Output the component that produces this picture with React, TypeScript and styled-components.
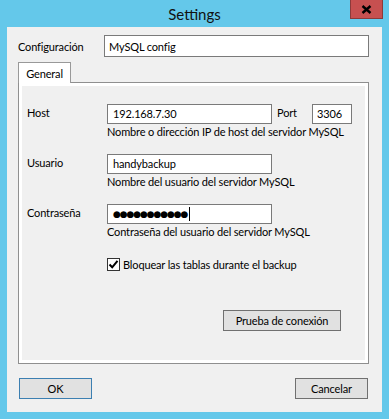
import React from 'react';
import styled, { createGlobalStyle } from 'styled-components';

const FRAME_BLUE = '#64c8ea';
const FACE = '#f0f0f0';
const EDGE = '#7a7a7a';

const GlobalStyle = createGlobalStyle`
  html, body {
    margin: 0;
    padding: 0;
    background: ${FRAME_BLUE};
  }
  body {
    font-family: Lato, 'Noto Sans', sans-serif;
    font-size: 11px;
    letter-spacing: -0.15px;
    color: #000;
  }
`;

/* Window chrome */
const Window = styled.div`
  width: 389px;
  height: 419px;
  display: flex;
  flex-direction: column;
  background: ${FRAME_BLUE};
  overflow: hidden;
`;

const TitleBar = styled.div`
  position: relative;
  height: 27px;
  display: flex;
  align-items: center;
  justify-content: center;
  font-size: 15px;
  letter-spacing: 0;
  color: #111;
`;

const CloseButton = styled.div`
  position: absolute;
  top: 0;
  right: 6px;
  width: 31px;
  height: 18px;
  background: #c75050;
  border: 1px solid #8c3a3a;
  border-top: none;
  display: flex;
  align-items: center;
  justify-content: center;
`;

const Client = styled.div`
  margin: 0 7px;
  height: 385px;
  box-sizing: border-box;
  background: ${FACE};
  padding: 8px 13px 0 11px;
  display: flex;
  flex-direction: column;
  white-space: nowrap;
`;

/* Controls */
const ConfigRow = styled.div`
  display: flex;
  align-items: center;
  height: 22px;
`;

const ConfigLabel = styled.span`
  width: 86px;
  flex: none;
`;

const TextBox = styled.div<{ $width?: number; $height?: number; $pad?: number }>`
  box-sizing: border-box;
  width: ${({ $width }) => ($width ? `${$width}px` : 'auto')};
  flex: ${({ $width }) => ($width ? 'none' : '1')};
  height: ${({ $height }) => $height ?? 20}px;
  border: 1px solid ${EDGE};
  background: #fff;
  padding: 0 ${({ $pad }) => $pad ?? 5}px;
  display: flex;
  align-items: center;
`;

const Dots = styled.span`
  font-family: 'DejaVu Sans', sans-serif;
  font-size: 9px;
  letter-spacing: -1.1px;
  line-height: 1;
`;

const Caret = styled.span`
  width: 1px;
  height: 14px;
  background: #000;
  margin-left: 2px;
`;

const TabStrip = styled.div`
  margin-top: 5px;
  height: 20px;
  display: flex;
`;

const Tab = styled.div`
  position: relative;
  z-index: 1;
  box-sizing: border-box;
  width: 53px;
  height: 21px;
  background: #fff;
  border: 1px solid #999;
  border-bottom: none;
  display: flex;
  align-items: center;
  justify-content: center;
`;

const Panel = styled.div`
  box-sizing: border-box;
  height: 282px;
  border: 1px solid #8f8f8f;
  background: #fff;
  padding: 3px;
  display: flex;
`;

const PanelBody = styled.div`
  flex: 1;
  min-width: 0;
  background: ${FACE};
  padding: 18px 24px 0 5px;
  display: flex;
  flex-direction: column;
`;

const FieldRow = styled.div`
  display: grid;
  grid-template-columns: 80px 1fr;
  margin-bottom: 14px;
  line-height: 16px;
`;

const FieldLabel = styled.span`
  padding-top: 1px;
`;

const FieldLine = styled.div`
  display: flex;
  align-items: flex-start;
`;

const PortLabel = styled.span`
  width: 35px;
  margin-left: 5px;
  padding-top: 1px;
`;

const Hint = styled.div`
  line-height: 16px;
`;

const CheckRow = styled.label`
  margin: 2px 0 0 80px;
  display: flex;
  align-items: center;
  gap: 3px;
  height: 16px;
`;

const CheckBox = styled.span`
  box-sizing: border-box;
  width: 13px;
  height: 13px;
  border: 1px solid #333;
  background: #fff;
  display: flex;
  align-items: center;
  justify-content: center;
`;

const ActionRow = styled.div`
  margin-top: 38px;
  display: flex;
  justify-content: flex-end;
`;

const Button = styled.div<{ $width: number; $default?: boolean }>`
  box-sizing: border-box;
  width: ${({ $width }) => $width}px;
  height: 21px;
  background: #e1e1e1;
  border: 1px solid ${({ $default }) => ($default ? '#3c7fb1' : '#707070')};
  display: flex;
  align-items: center;
  justify-content: center;
`;

const Footer = styled.div`
  margin-top: 14px;
  padding: 0 1px;
  display: flex;
  justify-content: space-between;
`;

export default function App() {
  return (
    <Window>
      <GlobalStyle />
      <TitleBar>
        Settings
        <CloseButton>
          <svg width="11" height="9" viewBox="0 0 11 9">
            <path d="M1.5 1 L9.5 8 M9.5 1 L1.5 8" stroke="#000" strokeWidth="2.4" />
          </svg>
        </CloseButton>
      </TitleBar>

      <Client>
        <ConfigRow>
          <ConfigLabel>Configuración</ConfigLabel>
          <TextBox $height={22} $pad={4}>MySQL config</TextBox>
        </ConfigRow>

        <TabStrip>
          <Tab>General</Tab>
        </TabStrip>
        <Panel>
          <PanelBody>
            <FieldRow>
              <FieldLabel>Host</FieldLabel>
              <div>
                <FieldLine>
                  <TextBox $width={165}>192.168.7.30</TextBox>
                  <PortLabel>Port</PortLabel>
                  <TextBox $width={40} $pad={4}>3306</TextBox>
                </FieldLine>
                <Hint>Nombre o dirección IP de host del servidor MySQL</Hint>
              </div>
            </FieldRow>

            <FieldRow>
              <FieldLabel>Usuario</FieldLabel>
              <div>
                <TextBox $width={165}>handybackup</TextBox>
                <Hint>Nombre del usuario del servidor MySQL</Hint>
              </div>
            </FieldRow>

            <FieldRow>
              <FieldLabel>Contraseña</FieldLabel>
              <div>
                <TextBox $width={165}>
                  <Dots>●●●●●●●●●●●</Dots>
                  <Caret />
                </TextBox>
                <Hint>Contraseña del usuario del servidor MySQL</Hint>
              </div>
            </FieldRow>

            <CheckRow>
              <CheckBox>
                <svg width="11" height="11" viewBox="0 0 11 11">
                  <path d="M1.5 5.5 L4.2 8.3 L9.5 1.8" fill="none" stroke="#000" strokeWidth="2" />
                </svg>
              </CheckBox>
              Bloquear las tablas durante el backup
            </CheckRow>

            <ActionRow>
              <Button $width={118}>Prueba de conexión</Button>
            </ActionRow>
          </PanelBody>
        </Panel>

        <Footer>
          <Button $width={73} $default>OK</Button>
          <Button $width={73}>Cancelar</Button>
        </Footer>
      </Client>
    </Window>
  );
}
